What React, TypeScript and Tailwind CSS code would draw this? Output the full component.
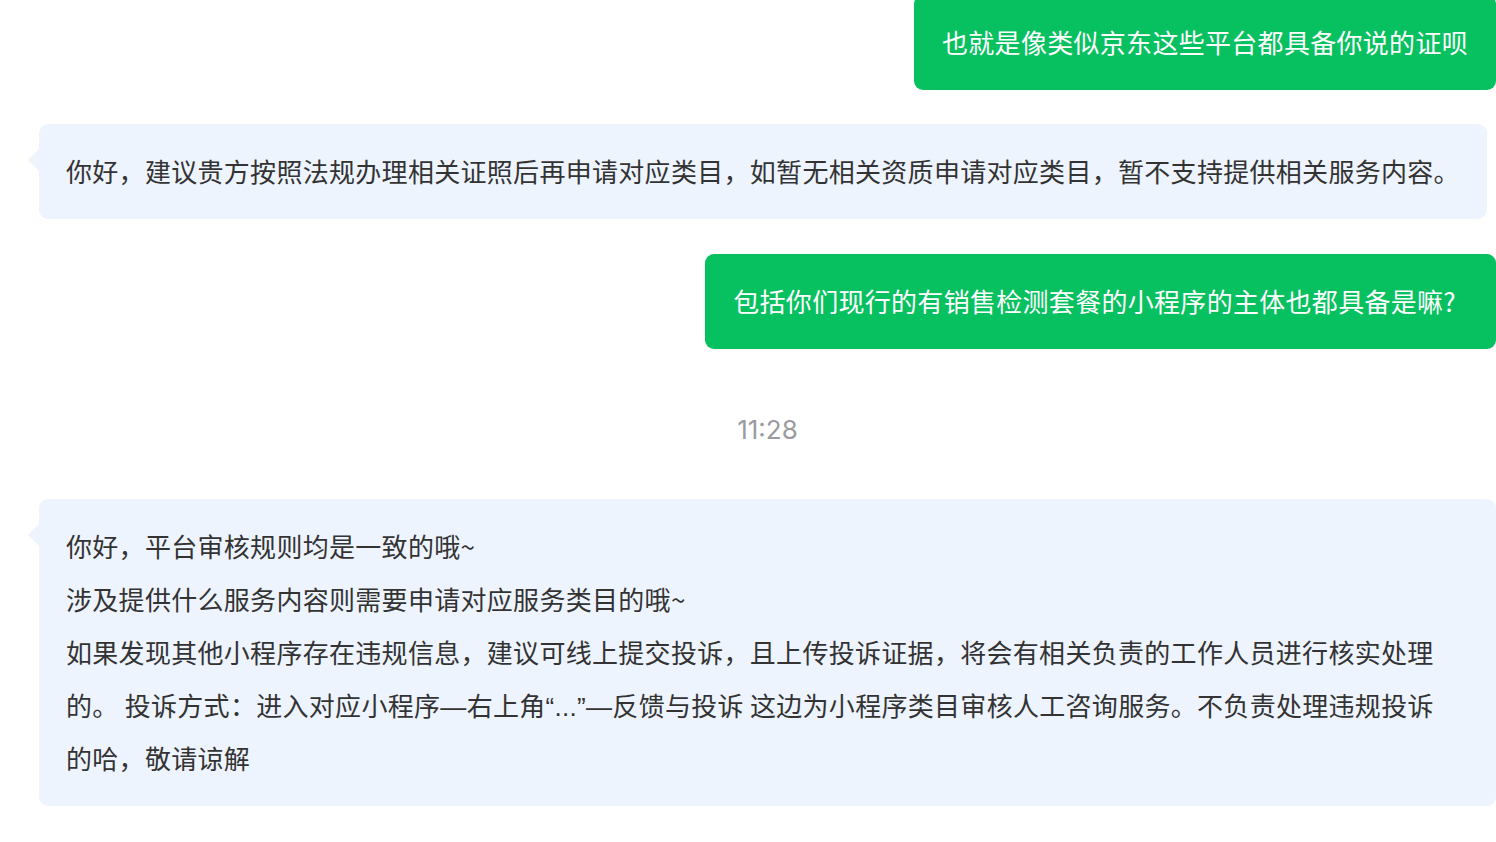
import React from "react";

const cjk = "font-['Noto_Sans_CJK_SC','Noto_Sans',sans-serif]";

function Right({ children, extra }: { children: React.ReactNode; extra?: string }) {
  return (
    <div className="flex justify-end">
      <div
        className={`rounded-[9px] bg-[#07c160] pl-[28px] pt-[20px] pb-[22px] text-[26px] leading-[53px] tracking-[0.3px] text-white ${cjk} ${extra ?? "pr-[28px]"}`}
      >
        {children}
      </div>
    </div>
  );
}

function Left({ children, full }: { children: React.ReactNode; full?: boolean }) {
  return (
    <div className="flex justify-start">
      <div
        className={`relative rounded-[9px] bg-[#eef4fe] pl-[27px] pr-[27px] pt-[20px] pb-[22px] text-[26px] leading-[53px] tracking-[0.3px] text-[#333333] ${cjk} ${full ? "w-full" : ""}`}
      >
        <span className="absolute left-[-11px] top-[25px] h-0 w-0 border-y-[11px] border-r-[11px] border-y-transparent border-r-[#eef4fe]" />
        {children}
      </div>
    </div>
  );
}

const latin = "font-['Liberation_Sans',sans-serif] leading-none";

export default function App() {
  return (
    <div className="h-[842px] w-full overflow-hidden bg-white">
      <div className="flex flex-col pl-[39px]">
        <div className="mt-[-5px]">
          <Right>也就是像类似京东这些平台都具备你说的证呗</Right>
        </div>
        <div className="mt-[34px]">
          <Left>你好，建议贵方按照法规办理相关证照后再申请对应类目，如暂无相关资质申请对应类目，暂不支持提供相关服务内容。</Left>
        </div>
        <div className="mt-[35px]">
          <Right extra="pr-[40px]">包括你们现行的有销售检测套餐的小程序的主体也都具备是嘛?</Right>
        </div>
        <div className="mt-[54px] h-[53px] text-center font-['Inter','Noto_Sans',sans-serif] text-[26px] leading-[53px] text-[#9a9aa0]">
          11:28
        </div>
        <div className="mt-[43px]">
          <Left full>
            你好，平台审核规则均是一致的哦~
            <br />
            涉及提供什么服务内容则需要申请对应服务类目的哦~
            <br />
            如果发现其他小程序存在违规信息，建议可线上提交投诉，且上传投诉证据，将会有相关负责的工作人员进行核实处理
            <br />
            的。 投诉方式：进入对应小程序<span className={latin}>—</span>右上角
            <span className={latin}>“...”—</span>
            反馈与投诉 这边为小程序类目审核人工咨询服务。不负责处理违规投诉
            <br />
            的哈，敬请谅解
          </Left>
        </div>
      </div>
    </div>
  );
}
